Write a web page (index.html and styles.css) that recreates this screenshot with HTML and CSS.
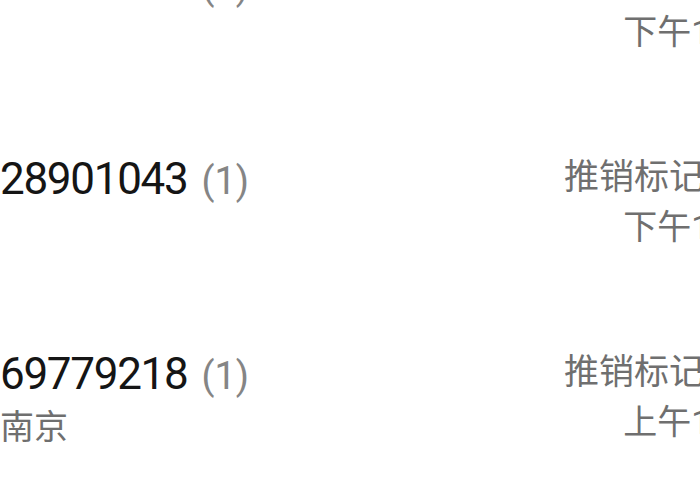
FILE: index.html
```html
<!DOCTYPE html>
<html lang="zh-CN">
<head>
<meta charset="utf-8">
<title>通话记录</title>
<link rel="stylesheet" href="styles.css">
</head>
<body>
<ul class="call-list">
  <li class="call-row">
    <div class="caller">
      <div class="num-line"><span class="num">62306795</span><span class="count">(1)</span></div>
    </div>
    <div class="meta">
      <div class="tag-line"><span class="tag">推销标记</span><svg class="info" viewBox="0 0 40 40"><circle cx="20" cy="20" r="16" fill="none" stroke="#8a8a8a" stroke-width="2.5"/><line x1="20" y1="18" x2="20" y2="28" stroke="#8a8a8a" stroke-width="3"/><circle cx="20" cy="12.5" r="2" fill="#8a8a8a"/></svg></div>
      <div class="time">下午12:41</div>
    </div>
  </li>
  <li class="call-row">
    <div class="caller">
      <div class="num-line"><span class="num">28901043</span><span class="count">(1)</span></div>
    </div>
    <div class="meta">
      <div class="tag-line"><span class="tag">推销标记</span><svg class="info" viewBox="0 0 40 40"><circle cx="20" cy="20" r="16" fill="none" stroke="#8a8a8a" stroke-width="2.5"/><line x1="20" y1="18" x2="20" y2="28" stroke="#8a8a8a" stroke-width="3"/><circle cx="20" cy="12.5" r="2" fill="#8a8a8a"/></svg></div>
      <div class="time">下午12:15</div>
    </div>
  </li>
  <li class="call-row">
    <div class="caller">
      <div class="num-line"><span class="num">69779218</span><span class="count">(1)</span></div>
      <div class="loc">南京</div>
    </div>
    <div class="meta">
      <div class="tag-line"><span class="tag">推销标记</span><svg class="info" viewBox="0 0 40 40"><circle cx="20" cy="20" r="16" fill="none" stroke="#8a8a8a" stroke-width="2.5"/><line x1="20" y1="18" x2="20" y2="28" stroke="#8a8a8a" stroke-width="3"/><circle cx="20" cy="12.5" r="2" fill="#8a8a8a"/></svg></div>
      <div class="time">上午11:32</div>
    </div>
  </li>
</ul>
</body>
</html>
```
FILE: styles.css
```css
html, body {
  margin: 0;
  padding: 0;
  background: #ffffff;
  overflow: hidden;
}

body {
  font-family: Roboto, "Noto Sans CJK SC", sans-serif;
}

.call-list {
  list-style: none;
  margin: -42px 0 0 0;
  padding: 0;
  width: 776px;
}

.call-row {
  display: flex;
  justify-content: space-between;
  height: 195px;
}

.caller {
  display: flex;
  flex-direction: column;
}

.num-line {
  display: flex;
  align-items: baseline;
  height: 52px;
  line-height: 52px;
}

.num {
  font-size: 44px;
  letter-spacing: -1.3px;
  color: #151515;
}

.count {
  font-size: 38px;
  color: #858585;
  margin-left: 14px;
}

.loc {
  font-size: 34px;
  line-height: 34px;
  margin-top: 10px;
  color: #6f6f6f;
}

.meta {
  display: flex;
  flex-direction: column;
  align-items: flex-end;
  padding-top: 3px;
  color: #6f6f6f;
}

.tag-line {
  display: flex;
  align-items: center;
  height: 44px;
}

.tag {
  font-size: 35px;
  line-height: 44px;
}

.info {
  width: 40px;
  height: 40px;
  margin-left: 32px;
}

.time {
  font-size: 34px;
  line-height: 44px;
  margin-top: 5px;
}
```
